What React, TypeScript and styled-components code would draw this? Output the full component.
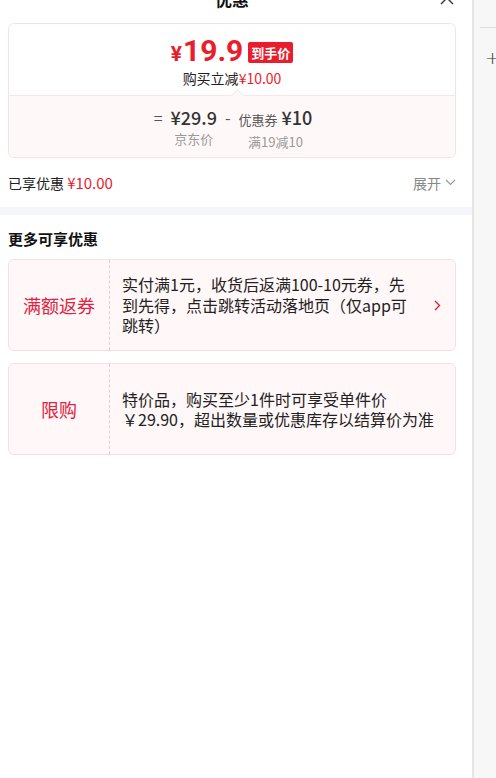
import styled, { createGlobalStyle } from 'styled-components';

const RED = '#ea1d2c';

const GlobalStyle = createGlobalStyle`
  body {
    margin: 0;
    font-family: "Noto Sans CJK SC", "Noto Sans", sans-serif;
    color: #222;
    background: #fff;
  }
`;

interface Offer {
  tag: string;
  text: string;
  link?: boolean;
}

const offers: Offer[] = [
  { tag: '满额返券', text: '实付满1元，收货后返满100-10元券，先到先得，点击跳转活动落地页（仅app可跳转）', link: true },
  { tag: '限购', text: '特价品，购买至少1件时可享受单件价￥29.90，超出数量或优惠库存以结算价为准' },
];

const App = () => {
  return (
    <>
      <GlobalStyle />
      <Page>
        <Panel>
          <Header>
            <Title>优惠</Title>
            <Close>
              <svg width="14" height="14" viewBox="0 0 14 14" fill="none" stroke="#333" strokeWidth="1.4">
                <path d="M1 1 L13 13 M13 1 L1 13" />
              </svg>
            </Close>
          </Header>

          <Section>
            <PriceCard>
              <PriceTop>
                <PriceRow>
                  <Yen>¥</Yen>
                  <BigPrice>19.9</BigPrice>
                  <Badge>到手价</Badge>
                </PriceRow>
                <Saved>
                  购买立减<RedText>¥10.00</RedText>
                </Saved>
              </PriceTop>
              <Formula>
                <Op>=</Op>
                <Term>
                  <TermValue>¥29.9</TermValue>
                  <TermLabel>京东价</TermLabel>
                </Term>
                <Op>-</Op>
                <Term>
                  <TermValue>
                    <Small>优惠券</Small> ¥10
                  </TermValue>
                  <TermLabel>满19减10</TermLabel>
                </Term>
              </Formula>
            </PriceCard>

            <SummaryRow>
              <span>
                已享优惠 <SummaryValue>¥10.00</SummaryValue>
              </span>
              <Expand>
                展开
                <svg width="11" height="7" viewBox="0 0 11 7" fill="none" stroke="#999" strokeWidth="1.1">
                  <path d="M1 1 L5.5 5.5 L10 1" />
                </svg>
              </Expand>
            </SummaryRow>
          </Section>

          <Band />

          <Section>
            <SectionTitle>更多可享优惠</SectionTitle>
            <OfferList>
              {offers.map((o) => (
                <OfferCard key={o.tag}>
                  <OfferTag>{o.tag}</OfferTag>
                  <OfferText>{o.text}</OfferText>
                  {o.link && (
                    <Arrow>
                      <svg width="7" height="11" viewBox="0 0 7 11" fill="none" stroke={RED} strokeWidth="1.4">
                        <path d="M1 1 L5.5 5.5 L1 10" />
                      </svg>
                    </Arrow>
                  )}
                </OfferCard>
              ))}
            </OfferList>
          </Section>
        </Panel>

        <Side>
          <SideLine />
          <Plus>+</Plus>
        </Side>
      </Page>
    </>
  );
};

export default App;

const Page = styled.div`
  display: flex;
  height: 778px;
  overflow: hidden;
`;

const Panel = styled.div`
  width: 472px;
  flex-shrink: 0;
  background: #fff;
`;

const Header = styled.div`
  height: 23px;
  padding: 0 16px 0 8px;
  display: flex;
  align-items: flex-end;
  justify-content: center;
  overflow: hidden;
  position: relative;
`;

const Title = styled.div`
  font-size: 17px;
  font-weight: 700;
  line-height: 20px;
  margin-bottom: 14px;
  color: #111;
`;

const Close = styled.div`
  position: absolute;
  right: 18px;
  bottom: 18px;
  line-height: 0;
`;

const Section = styled.div`
  padding: 0 16px 0 8px;
`;

const PriceCard = styled.div`
  border: 1px solid #f6e1e4;
  border-radius: 6px;
  overflow: hidden;
`;

const PriceTop = styled.div`
  padding: 10px 0 7px;
  display: flex;
  flex-direction: column;
  align-items: center;
`;

const PriceRow = styled.div`
  display: flex;
  align-items: baseline;
  height: 34px;
  color: ${RED};
  font-family: Roboto, "Noto Sans", sans-serif;
  font-weight: 700;
`;

const Yen = styled.span`
  font-size: 21px;
  margin-right: 1px;
`;

const BigPrice = styled.span`
  font-size: 30px;
  line-height: 34px;
`;

const Badge = styled.span`
  align-self: center;
  margin-left: 5px;
  margin-top: 2px;
  padding: 0 3px;
  height: 21px;
  line-height: 21px;
  background: ${RED};
  color: #fff;
  font-family: "Noto Sans CJK SC", sans-serif;
  font-size: 13px;
  font-weight: 700;
  border-radius: 2px;
`;

const Saved = styled.div`
  font-size: 14px;
  line-height: 20px;
  color: #222;
`;

const RedText = styled.span`
  color: ${RED};
`;

const Formula = styled.div`
  position: relative;
  background: #fff8f8;
  border-top: 1px solid #f8e6e8;
  padding: 9px 0 6px;
  display: flex;
  justify-content: center;
  align-items: flex-start;
  gap: 6px;

  &::before {
    content: '';
    position: absolute;
    top: -5px;
    left: 224px;
    width: 8px;
    height: 8px;
    background: #fff8f8;
    border-top: 1px solid #f8e6e8;
    border-left: 1px solid #f8e6e8;
    transform: rotate(45deg);
  }
`;

const Op = styled.span`
  font-size: 16px;
  line-height: 24px;
  color: #555;
  padding: 0 2px;
`;

const Term = styled.div`
  display: flex;
  flex-direction: column;
  align-items: center;
`;

const TermValue = styled.span`
  font-size: 18px;
  line-height: 24px;
  font-weight: 500;
  color: #333;
`;

const Small = styled.span`
  font-size: 13px;
  font-weight: 400;
  color: #555;
`;

const TermLabel = styled.span`
  margin-top: 1px;
  font-size: 13px;
  line-height: 18px;
  color: #999;
`;

const SummaryRow = styled.div`
  height: 49px;
  display: flex;
  align-items: center;
  justify-content: space-between;
  font-size: 14px;
  color: #222;
`;

const SummaryValue = styled.span`
  color: ${RED};
  font-size: 15px;
`;

const Expand = styled.span`
  display: flex;
  align-items: center;
  gap: 4px;
  color: #888;
  font-size: 14px;
`;

const Band = styled.div`
  height: 8px;
  background: #f5f6fa;
`;

const SectionTitle = styled.div`
  padding: 13px 0 10px;
  font-size: 15px;
  font-weight: 700;
  line-height: 21px;
  color: #111;
`;

const OfferList = styled.div`
  display: flex;
  flex-direction: column;
  gap: 12px;
`;

const OfferCard = styled.div`
  display: flex;
  min-height: 90px;
  background: #fff7f8;
  border: 1px solid #f8dfe3;
  border-radius: 6px;
`;

const OfferTag = styled.div`
  width: 100px;
  flex-shrink: 0;
  border-right: 1px dashed #efc8cf;
  display: flex;
  align-items: center;
  justify-content: center;
  color: #e2213f;
  font-size: 18px;
`;

const OfferText = styled.div`
  flex: 1;
  align-self: center;
  padding: 0 12px;
  font-size: 16px;
  line-height: 20.5px;
  color: #222;
`;

const Arrow = styled.div`
  width: 32px;
  flex-shrink: 0;
  display: flex;
  align-items: center;
  justify-content: center;
  padding-right: 2px;
`;

const Side = styled.div`
  flex: 1;
  background: #f7f7f7;
  border-left: 2px solid #e6e6e6;
  padding-top: 27px;
`;

const SideLine = styled.div`
  height: 1px;
  background: #dcdcdc;
  margin-left: 6px;
`;

const Plus = styled.div`
  margin: 18px 0 0 11px;
  font-family: "DejaVu Sans", sans-serif;
  font-weight: 200;
  font-size: 18px;
  line-height: 24px;
  color: #333;
`;
